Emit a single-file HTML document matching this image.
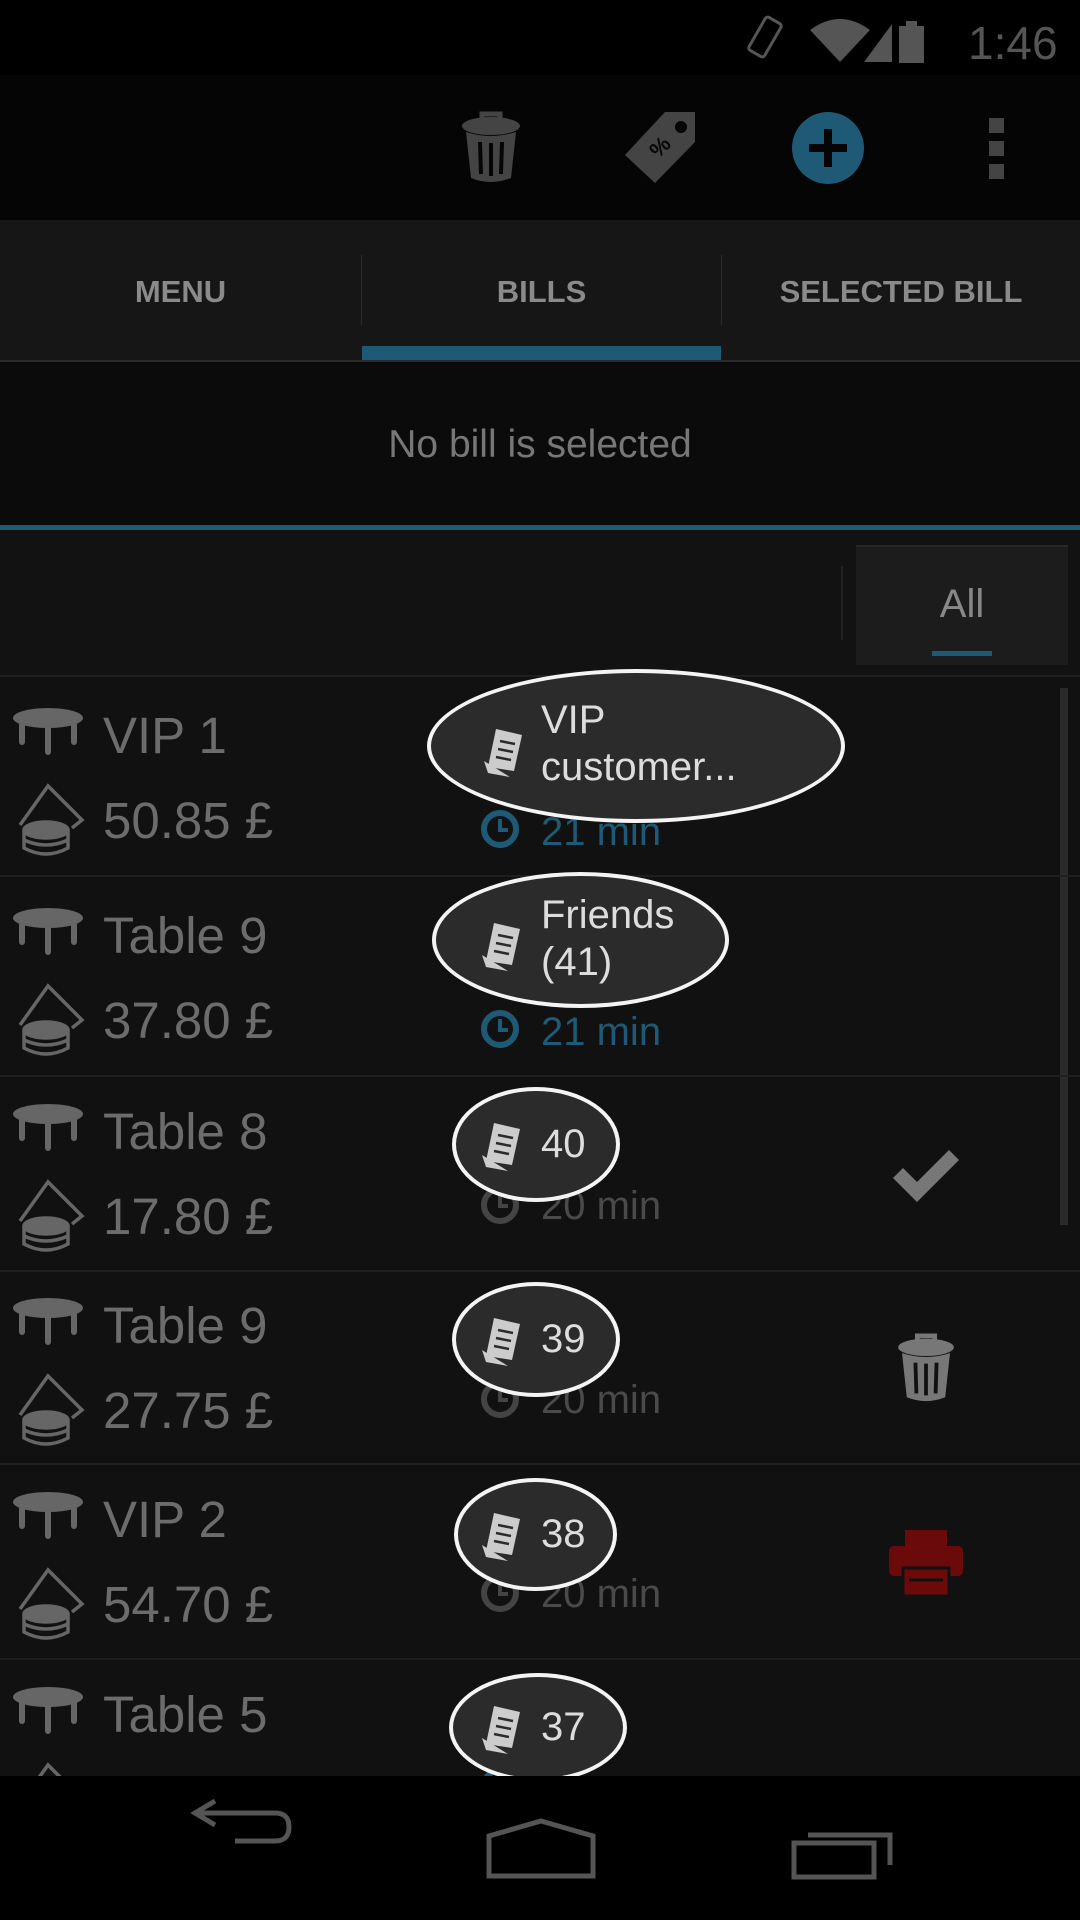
<!DOCTYPE html>
<html><head><meta charset="utf-8"><style>
*{margin:0;padding:0;box-sizing:border-box}
body{width:1080px;height:1920px;background:#111;position:relative;overflow:hidden;font-family:"Liberation Sans",sans-serif}
.a{position:absolute}
.name{position:absolute;left:103px;font-size:51px;color:#6c6c6c;line-height:1.05}
.sep{position:absolute;left:0;width:1080px;height:2px;background:#1f1f1f}
.bub{position:absolute;background:#2b2b2b;border:4px solid #f4f4f4;border-radius:50%;color:#ddd;font-size:40px;line-height:47px}
.tm{position:absolute;left:541px;font-size:40px;color:#4a4a4a;line-height:1}
</style></head><body>
<div class="a" style="left:0;top:0;width:1080px;height:75px;background:#000"></div>
<svg class="a" style="left:740px;top:10px" width="240" height="60" viewBox="0 0 240 60">
<g fill="none" stroke="#555" stroke-width="3"><rect x="16" y="8" width="18" height="38" rx="3" transform="rotate(30 25 27)"/></g>
<path d="M70 20 Q100 -2 130 20 L100 52 Z" fill="#555"/>
<path d="M124 52 L152 14 L152 52 Z" fill="#555"/>
<rect x="159" y="16" width="25" height="37" fill="#555"/><rect x="166" y="11" width="11" height="6" fill="#555"/>
</svg>
<div class="a" style="left:968px;top:16px;font-size:46px;color:#555">1:46</div>
<div class="a" style="left:0;top:75px;width:1080px;height:145px;background:#050505"></div>
<svg class="a" style="left:460px;top:110px" width="62" height="75" viewBox="0 0 62 75">
<path d="M22 10 V4 H40 V10" fill="none" stroke="#444" stroke-width="5"/>
<ellipse cx="31" cy="16" rx="29" ry="9" fill="#444"/>
<path d="M6 22 L11 68 Q31 76 51 68 L56 22 Q31 30 6 22Z" fill="#444"/>
<g stroke="#050505" stroke-width="4"><line x1="20" y1="32" x2="21" y2="64"/><line x1="31" y1="33" x2="31" y2="66"/><line x1="42" y1="32" x2="41" y2="64"/></g>
</svg>
<svg class="a" style="left:623px;top:110px" width="75" height="75" viewBox="0 0 75 75">
<path d="M72 2 L72 32 L32 73 L2 45 L42 2Z" fill="#444"/>
<circle cx="58" cy="17" r="6" fill="#050505"/>
<text x="30" y="48" font-size="22" fill="#050505" font-weight="bold" transform="rotate(-45 34 42)">%</text>
</svg>
<svg class="a" style="left:791px;top:111px" width="74" height="74" viewBox="0 0 74 74">
<circle cx="37" cy="37" r="36" fill="#1e5a75"/>
<rect x="33" y="18" width="8" height="38" fill="#050505"/><rect x="18" y="33" width="38" height="8" fill="#050505"/>
</svg>
<div class="a" style="left:989px;top:118px;width:15px;height:15px;background:#444"></div>
<div class="a" style="left:989px;top:141px;width:15px;height:15px;background:#444"></div>
<div class="a" style="left:989px;top:164px;width:15px;height:15px;background:#444"></div>
<div class="a" style="left:0;top:220px;width:1080px;height:142px;background:#161616"></div>
<div class="a" style="left:361px;top:255px;width:1px;height:70px;background:#2a2a2a"></div>
<div class="a" style="left:721px;top:255px;width:1px;height:70px;background:#2a2a2a"></div>
<div class="a" style="left:0;top:274px;width:361px;text-align:center;font-size:31px;font-weight:bold;color:#8a8a8a">MENU</div>
<div class="a" style="left:362px;top:274px;width:359px;text-align:center;font-size:31px;font-weight:bold;color:#8a8a8a">BILLS</div>
<div class="a" style="left:722px;top:274px;width:358px;text-align:center;font-size:31px;font-weight:bold;color:#8a8a8a">SELECTED BILL</div>
<div class="a" style="left:362px;top:346px;width:359px;height:14px;background:#1e5a75"></div>
<div class="a" style="left:0;top:360px;width:1080px;height:2px;background:#2a2a2a"></div>
<div class="a" style="left:0;top:362px;width:1080px;height:164px;background:#0b0b0b"></div>
<div class="a" style="left:0;top:423px;width:1080px;text-align:center;font-size:39px;color:#777">No bill is selected</div>
<div class="a" style="left:0;top:525px;width:1080px;height:5px;background:#1e5a75"></div>
<div class="a" style="left:0;top:530px;width:1080px;height:146px;background:#121212"></div>
<div class="a" style="left:841px;top:566px;width:2px;height:74px;background:#222"></div>
<div class="a" style="left:856px;top:545px;width:212px;height:120px;background:#1c1c1c;border-top:2px solid #262626"></div>
<div class="a" style="left:856px;top:582px;width:212px;text-align:center;font-size:40px;color:#888">All</div>
<div class="a" style="left:932px;top:651px;width:60px;height:5px;background:#1e5a75"></div>
<div class="sep" style="top:675px"></div>
<div class="a" style="left:1060px;top:688px;width:8px;height:537px;background:#2a2a2a"></div>
<svg width="0" height="0" style="position:absolute"><defs>
<g id="tbl"><ellipse cx="36" cy="10" rx="35" ry="10" fill="#666"/><g stroke="#666" stroke-width="6" stroke-linecap="round"><line x1="10" y1="14" x2="10" y2="34"/><line x1="36" y1="16" x2="36" y2="44"/><line x1="62" y1="14" x2="62" y2="34"/></g></g>
<g id="cash" fill="none" stroke="#666" stroke-width="3.5"><path d="M8 45 L36 6 L70 40 L60 48"/><ellipse cx="34" cy="50" rx="22" ry="8" fill="#666"/><path d="M12 50 V68 Q34 80 56 68 V50"/><path d="M12 60 Q34 70 56 60"/></g>
<g id="rcp"><path d="M14 2 L40 8 L32 44 L6 40 Z" fill="#ccc"/><path d="M2 34 L6 46 L28 50 Z" fill="#ccc"/><g stroke="#2b2b2b" stroke-width="2.5"><line x1="18" y1="14" x2="33" y2="17"/><line x1="16" y1="22" x2="31" y2="25"/><line x1="14" y1="30" x2="29" y2="33"/></g></g>
<g id="clk"><circle cx="22" cy="21" r="16" fill="none" stroke-width="6"/><path d="M22 11 V22 H30" fill="none" stroke-width="4"/></g>
</defs></svg>
<svg class="a" style="left:12px;top:708px" width="74" height="50"><use href="#tbl"/></svg>
<svg class="a" style="left:12px;top:780px" width="74" height="80"><use href="#cash"/></svg>
<div class="name" style="top:709px">VIP 1</div>
<div class="name" style="top:794px">50.85 £</div>
<svg class="a" style="left:478px;top:808px" width="44" height="44" stroke="#1e5a75"><use href="#clk"/></svg>
<div class="tm" style="top:812px;color:#1e5a75">21 min</div>
<div class="sep" style="top:875px"></div>

<svg class="a" style="left:12px;top:908px" width="74" height="50"><use href="#tbl"/></svg>
<svg class="a" style="left:12px;top:980px" width="74" height="80"><use href="#cash"/></svg>
<div class="name" style="top:909px">Table 9</div>
<div class="name" style="top:994px">37.80 £</div>
<svg class="a" style="left:478px;top:1008px" width="44" height="44" stroke="#1e5a75"><use href="#clk"/></svg>
<div class="tm" style="top:1012px;color:#1e5a75">21 min</div>
<div class="sep" style="top:1075px"></div>

<svg class="a" style="left:12px;top:1104px" width="74" height="50"><use href="#tbl"/></svg>
<svg class="a" style="left:12px;top:1176px" width="74" height="80"><use href="#cash"/></svg>
<div class="name" style="top:1105px">Table 8</div>
<div class="name" style="top:1190px">17.80 £</div>
<svg class="a" style="left:478px;top:1184px" width="44" height="44" stroke="#444"><use href="#clk"/></svg>
<div class="tm" style="top:1186px">20 min</div>
<svg class="a" style="left:889px;top:1148px" width="74" height="56" viewBox="0 0 74 56"><path d="M4 30 L14 20 L28 34 L60 2 L70 12 L28 54 Z" fill="#777"/></svg>
<div class="sep" style="top:1270px"></div>

<svg class="a" style="left:12px;top:1298px" width="74" height="50"><use href="#tbl"/></svg>
<svg class="a" style="left:12px;top:1370px" width="74" height="80"><use href="#cash"/></svg>
<div class="name" style="top:1299px">Table 9</div>
<div class="name" style="top:1384px">27.75 £</div>
<svg class="a" style="left:478px;top:1378px" width="44" height="44" stroke="#444"><use href="#clk"/></svg>
<div class="tm" style="top:1380px">20 min</div>
<svg class="a" style="left:896px;top:1332px" width="60" height="72" viewBox="0 0 62 75">
<path d="M22 10 V4 H40 V10" fill="none" stroke="#777" stroke-width="5"/>
<ellipse cx="31" cy="16" rx="29" ry="9" fill="#777"/>
<path d="M6 22 L11 68 Q31 76 51 68 L56 22 Q31 30 6 22Z" fill="#777"/>
<g stroke="#111" stroke-width="4"><line x1="20" y1="32" x2="21" y2="64"/><line x1="31" y1="33" x2="31" y2="66"/><line x1="42" y1="32" x2="41" y2="64"/></g></svg>
<div class="sep" style="top:1463px"></div>

<svg class="a" style="left:12px;top:1492px" width="74" height="50"><use href="#tbl"/></svg>
<svg class="a" style="left:12px;top:1564px" width="74" height="80"><use href="#cash"/></svg>
<div class="name" style="top:1493px">VIP 2</div>
<div class="name" style="top:1578px">54.70 £</div>
<svg class="a" style="left:478px;top:1572px" width="44" height="44" stroke="#444"><use href="#clk"/></svg>
<div class="tm" style="top:1574px">20 min</div>
<svg class="a" style="left:889px;top:1530px" width="74" height="66" viewBox="0 0 74 66"><rect x="16" y="0" width="42" height="18" fill="#6b0a0a"/><rect x="0" y="16" width="74" height="30" rx="5" fill="#6b0a0a"/><rect x="14" y="38" width="46" height="28" fill="#6b0a0a" stroke="#111" stroke-width="3"/><line x1="20" y1="50" x2="54" y2="50" stroke="#111" stroke-width="3"/></svg>
<div class="sep" style="top:1658px"></div>

<svg class="a" style="left:12px;top:1687px" width="74" height="50"><use href="#tbl"/></svg>
<svg class="a" style="left:12px;top:1759px" width="74" height="80"><use href="#cash"/></svg>
<div class="name" style="top:1688px">Table 5</div>
<svg class="a" style="left:478px;top:1765px" width="44" height="44" stroke="#1e5a75"><use href="#clk"/></svg>

<div class="bub" style="left:427px;top:669px;width:418px;height:154px"><svg class="a" style="left:51px;top:54px" width="44" height="52"><use href="#rcp"/></svg><div class="a" style="left:110px;top:24px">VIP<br>customer...</div></div>
<div class="bub" style="left:432px;top:872px;width:297px;height:136px"><svg class="a" style="left:44px;top:45px" width="44" height="52"><use href="#rcp"/></svg><div class="a" style="left:105px;top:16px">Friends<br>(41)</div></div>
<div class="bub" style="left:452px;top:1087px;width:168px;height:115px"><svg class="a" style="left:24px;top:30px" width="44" height="52"><use href="#rcp"/></svg><div class="a" style="left:85px;top:30px">40</div></div>
<div class="bub" style="left:452px;top:1282px;width:168px;height:115px"><svg class="a" style="left:24px;top:30px" width="44" height="52"><use href="#rcp"/></svg><div class="a" style="left:85px;top:30px">39</div></div>
<div class="bub" style="left:454px;top:1478px;width:163px;height:113px"><svg class="a" style="left:22px;top:29px" width="44" height="52"><use href="#rcp"/></svg><div class="a" style="left:83px;top:29px">38</div></div>
<div class="bub" style="left:449px;top:1673px;width:178px;height:109px"><svg class="a" style="left:27px;top:27px" width="44" height="52"><use href="#rcp"/></svg><div class="a" style="left:88px;top:27px">37</div></div>

<div class="a" style="left:0;top:1776px;width:1080px;height:144px;background:#000"></div>
<svg class="a" style="left:185px;top:1795px" width="110" height="55" viewBox="0 0 110 55"><path d="M30 6 L10 18 L30 30 M10 18 H90 Q104 18 104 32 Q104 46 90 46 H50" fill="none" stroke="#555" stroke-width="5"/></svg>
<svg class="a" style="left:485px;top:1818px" width="112" height="62" viewBox="0 0 112 62"><path d="M4 18 L56 3 L108 18 V58 H4 Z" fill="none" stroke="#555" stroke-width="5"/></svg>
<svg class="a" style="left:790px;top:1825px" width="108" height="56" viewBox="0 0 108 56"><rect x="4" y="18" width="80" height="34" fill="none" stroke="#555" stroke-width="5"/><path d="M18 10 H100 V40" fill="none" stroke="#555" stroke-width="5"/></svg>
</body></html>
